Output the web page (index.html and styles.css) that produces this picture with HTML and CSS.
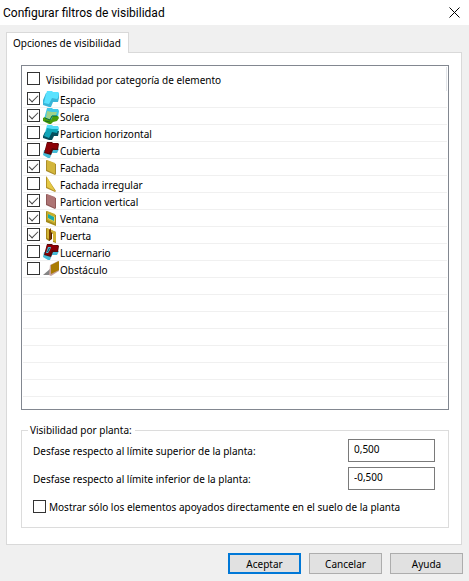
FILE: index.html
```html
<!DOCTYPE html>
<html lang="es">
<head>
<meta charset="utf-8">
<title>Configurar filtros de visibilidad</title>
<link rel="stylesheet" href="styles.css">
</head>
<body>
<main class="dialog">
  <header class="titlebar">
    <h1>Configurar filtros de visibilidad</h1>
    <button class="close" type="button" aria-label="Cerrar"><svg width="11" height="11" viewBox="0 0 11 11"><path d="M.5 .5l10 10M10.5 .5l-10 10" stroke="#000" stroke-width="1"/></svg></button>
  </header>
  <div class="tabs"><button class="tab" type="button">Opciones de visibilidad</button></div>
  <section class="panel">
    <div class="list">
      <label class="list-head"><input type="checkbox"><span>Visibilidad por categoría de elemento</span></label>
      <ul class="rows">
        <li><label><input type="checkbox" checked><svg class="icon" viewBox="0 0 16 16"><path d="M3 2L0 9v5l6 2h2l2-5h5l1-4V2z" fill="#39b5d8"/><path d="M4 0h5l1 1h5l1 1-1 5-1 1-5-1-3 6-5-1 2-9z" fill="#5ae2ff"/></svg><span>Espacio</span></label></li>
        <li><label><input type="checkbox" checked><svg class="icon" viewBox="0 0 16 16"><path d="M4 0h5l1 1h5l1 2-1 6-5 1-2 4-7-3z" fill="#42c8e8"/><path d="M0 10l2-1 1 2 5 1 2-4h5l1 2-2 3-4 1-2 2H6l-4-2-2-1z" fill="#4a9c08"/><path d="M4 3l5 1h5l-1 3H9l-2 4-4-1z" fill="#a0d28c"/><path d="M2 10l5 2 2-4h5M2 13l5 1" fill="none" stroke="#176c24"/></svg><span>Solera</span></label></li>
        <li><label><input type="checkbox"><svg class="icon" viewBox="0 0 16 16"><path d="M4 0h5l1 1h5l1 2-1 6-5 1-2 4-7-3z" fill="#55dcf7"/><path d="M2 7l-2 4v2l6 2h3l2-4h4l1-5z" fill="#064f5e"/><path d="M4 3l5 1h6l-1 4-5-1-3 6-5-2z" fill="#10a5b8"/></svg><span>Particion horizontal</span></label></li>
        <li><label><input type="checkbox"><svg class="icon" viewBox="0 0 16 16"><path d="M1 8l-1 5 5 3h2l2-5h5l2-4z" fill="#45bbd7"/><path d="M4 0h5l1 1h5l1 1-1 6h-5l-2 5-7-2z" fill="#5b080a"/><path d="M4 1h5l6 1-1 5-5-1-3 5-4-1z" fill="#8c0006"/></svg><span>Cubierta</span></label></li>
        <li><label><input type="checkbox" checked><svg class="icon" viewBox="0 0 16 16"><path d="M3 1l10 4v10l-1 1-9-4z" fill="#aa8d2d"/><path d="M4 1l8 3v11l-8-4z" fill="#d3b63c"/></svg><span>Fachada</span></label></li>
        <li><label><input type="checkbox"><svg class="icon" viewBox="0 0 16 16"><path d="M3 0l10 15-1 1-9-4z" fill="#b29127"/><path d="M4 1l8 14-8-4z" fill="#e5c844"/></svg><span>Fachada irregular</span></label></li>
        <li><label><input type="checkbox" checked><svg class="icon" viewBox="0 0 16 16"><path d="M3 1l10 4v10l-1 1-9-4z" fill="#8f5757"/><path d="M4 1l8 3v11l-8-4z" fill="#ad7474"/></svg><span>Particion vertical</span></label></li>
        <li><label><input type="checkbox" checked><svg class="icon" viewBox="0 0 16 16"><path d="M3 1l10 4v11l-10-4z" fill="#a48a1b"/><path d="M4 1l8 3v10l-8-4z" fill="#c7ae2c"/><path d="M5 4l7 3v5l-7-3z" fill="#e6d45b"/><path d="M5 4l6 3v4l-6-3z" fill="#1ba9a8"/></svg><span>Ventana</span></label></li>
        <li><label><input type="checkbox" checked><svg class="icon" viewBox="0 0 16 16"><path d="M3 1l10 4v11l-3-1V7L6 5v9l-3-2z" fill="#a38319"/><path d="M4 1l9 4v10l-3-1V6L6 4v8l-2-1z" fill="#d2b336"/><path d="M6 4l3 2v6l-3 2z" fill="#512100"/><path d="M6 3l2-2v11l-2 2z" fill="#7c4100"/></svg><span>Puerta</span></label></li>
        <li><label><input type="checkbox"><svg class="icon" viewBox="0 0 16 16"><path d="M1 8l-1 5 5 3h2l2-5h5l2-4z" fill="#45bbd7"/><path d="M4 0h5l1 1h5l1 1-1 6h-5l-2 5-7-2z" fill="#5b080a"/><path d="M4 1h5l6 1-1 5-5-1-3 5-4-1z" fill="#8c0006"/><path d="M5 3h3l-1 3-2 3H3z" fill="#42c5df"/><path d="M6 4h1L5 8H4z" fill="#2a3f50"/></svg><span>Lucernario</span></label></li>
        <li><label><input type="checkbox"><svg class="icon" viewBox="0 0 16 16"><path d="M0 14l7-6v6z" fill="#858585"/><path d="M7 4l8-4 1 1v9l-8 5-2-1z" fill="#c6a29c"/><path d="M8 4l8-4v9l-8 4z" fill="#a97b03"/></svg><span>Obstáculo</span></label></li>
        <li></li><li></li><li></li><li></li><li></li><li></li><li></li>
      </ul>
    </div>
    <fieldset class="group">
      <legend>Visibilidad por planta:</legend>
      <div class="field"><label for="sup">Desfase respecto al límite superior de la planta:</label><input id="sup" type="text" value="0,500"></div>
      <div class="field"><label for="inf">Desfase respecto al límite inferior de la planta:</label><input id="inf" type="text" value="-0,500"></div>
      <label class="only"><input type="checkbox"><span>Mostrar sólo los elementos apoyados directamente en el suelo de la planta</span></label>
    </fieldset>
  </section>
  <footer class="actions">
    <button class="btn primary" type="button">Aceptar</button>
    <button class="btn" type="button">Cancelar</button>
    <button class="btn" type="button">Ayuda</button>
  </footer>
</main>
</body>
</html>
```
FILE: styles.css
```css
* { box-sizing: border-box; }
body {
  margin: 0;
  background: #f0f0f0;
  color: #000;
  font: 10px/16px "Noto Sans", sans-serif;
}
button, input { font: inherit; color: inherit; }
.dialog { display: flex; flex-direction: column; min-height: 100vh; }
.titlebar {
  display: flex;
  align-items: center;
  justify-content: space-between;
  height: 25px;
  padding: 0 9px 0 3px;
  background: #fff;
}
h1 { margin: 0; font: 12px/24px "Segoe UI", Roboto, sans-serif; }
.close { display: flex; padding: 0; border: 0; background: none; }
.tabs { display: flex; padding: 7px 6px 0; }
.tab {
  position: relative;
  z-index: 1;
  height: 21px;
  margin-bottom: -1px;
  padding: 0 7px 0 6px;
  border: 1px solid #d9d9d9;
  border-bottom: 0;
  background: #fff;
}
.panel {
  display: flex;
  flex: 1;
  flex-direction: column;
  margin: 0 7px 0 6px;
  padding: 12px 12px 16px 14px;
  border: 1px solid #d9d9d9;
  background: #fff;
}
.list { flex: 1; padding: 1px; border: 1px solid #828790; }
.list-head {
  display: flex;
  align-items: center;
  gap: 6px;
  height: 24px;
  padding: 0 0 1px 4px;
  border-right: 1px solid #e2e5ea;
}
.list-head span { padding-top: 2px; }
.rows { margin: 0; padding: 0; list-style: none; }
.rows li { height: 17px; border-bottom: 1px solid #f0f0f0; }
.rows label { display: flex; align-items: flex-start; height: 16px; padding-left: 4px; }
.rows span { padding-top: 1px; }
.icon { width: 16px; height: 16px; margin: 0 1px 0 3px; }
input[type="checkbox"] {
  flex: none;
  appearance: none;
  display: grid;
  place-items: start center;
  width: 13px;
  height: 13px;
  margin: 0;
  border: 1px solid #333;
  background: #fff;
}
.rows input[type="checkbox"] { margin-top: 1px; }
input[type="checkbox"]:checked::before {
  content: "";
  width: 8px;
  height: 4px;
  margin-top: 2px;
  border: solid #444;
  border-width: 0 0 1px 1px;
  transform: rotate(-45deg);
}
.group {
  min-width: 0;
  margin: 12px 0 0;
  padding: 1px 13px 9px 11px;
  border: 1px solid #dcdcdc;
}
legend { margin-left: -5px; padding: 0 3px 0 2px; }
.field { display: flex; align-items: center; justify-content: space-between; margin-bottom: 5px; }
.field input {
  width: 87px;
  height: 23px;
  padding: 0 5px 3px;
  border: 1px solid #7a7a7a;
  border-radius: 0;
  background: #fff;
}
.only { display: flex; align-items: center; gap: 3px; height: 23px; }
.actions { display: flex; justify-content: flex-end; gap: 8px; padding: 8px 6px 7px; }
.btn { width: 73px; height: 21px; padding: 0; border: 1px solid #adadad; background: #e1e1e1; }
.primary { border: 2px solid #0078d7; }
```
